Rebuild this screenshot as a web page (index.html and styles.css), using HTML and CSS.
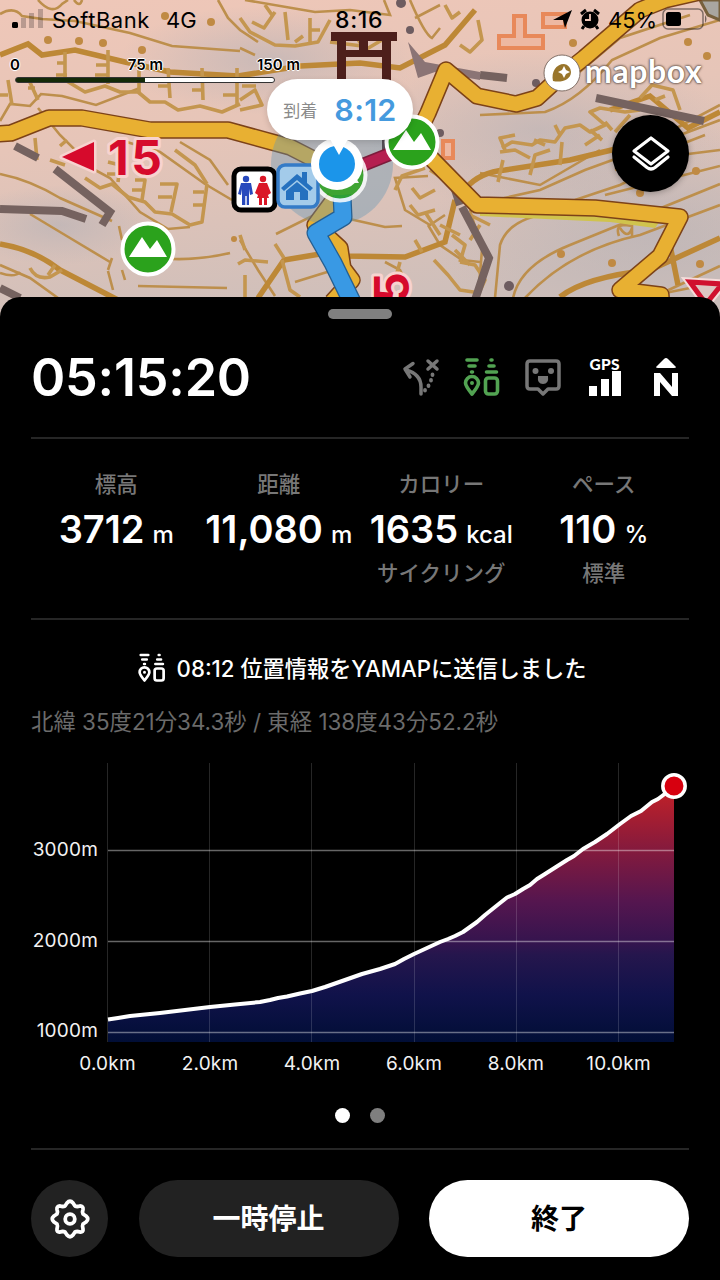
FILE: index.html
```
<!DOCTYPE html>
<html lang="ja">
<head>
    <meta charset="UTF-8">
    <title>YAMAP</title>
    <link rel="stylesheet" href="styles.css">
</head>
<body>
    <!-- 地図 -->
    <div class="map">
        <svg class="map-canvas" width="720" height="320" viewBox="0 0 720 320">
            <defs>
                <linearGradient id="land" x1="0" y1="0" x2="0.25" y2="1">
                    <stop offset="0" stop-color="#efc7b8"/>
                    <stop offset="0.45" stop-color="#e6c5b8"/>
                    <stop offset="1" stop-color="#cfbfba"/>
                </linearGradient>
                <radialGradient id="shade">
                    <stop offset="0" stop-color="#b4b1b6" stop-opacity="0.6"/>
                    <stop offset="1" stop-color="#b4b1b6" stop-opacity="0"/>
                </radialGradient>
            </defs>
            <rect width="720" height="320" fill="url(#land)"/>
            <ellipse cx="270" cy="60" rx="150" ry="55" fill="url(#shade)"/>
            <ellipse cx="540" cy="130" rx="190" ry="80" fill="url(#shade)"/>
            <ellipse cx="650" cy="230" rx="220" ry="110" fill="url(#shade)"/>
            <ellipse cx="60" cy="225" rx="100" ry="40" fill="url(#shade)"/>

            <!-- 等高線 -->
            <g class="contour">
                <path d="M0 14Q14 6 22 16L42 19L75 21L130 33L172 46L240 51"/>
                <path d="M38 0Q52 16 62 4L68 0M74 0Q80 8 82 0M218 0L228 18L240 30L258 42"/>
                <path d="M0 174Q30 180 60 198L112 221M30 214L70 238L110 262M0 265L30 278L58 298"/>
                <path d="M38 108L60 135L95 170L110 178L140 212L168 229L190 227M120 140L160 152L205 184L232 200"/>
                <path d="M172 259Q200 260 230 253M138 286L227 288M119 226L122 240M112 258L108 270M108 271L113 290M122 270L125 280"/>
                <path d="M0 121L10 104L30 106L41 94L62 96L96 105L140 88"/>
                <path d="M276 234L320 212L345 218L385 227L402 226M295 282L340 268M385 262L400 270L410 290"/>
                <path d="M500 199L540 190L585 170L640 150L720 120M575 200L620 185L680 155L720 150"/>
                <path d="M495 298L500 245Q510 215 560 213M513 298Q520 265 570 245L720 184M525 298Q570 250 640 235L720 205M660 294L720 266"/>
                <path d="M480 115L545 112Q580 100 612 60L660 38L720 20M570 80L620 38L690 15"/>
                <path d="M480 173L540 185L600 150M650 142L720 105M470 210L482 250L478 298"/>
                <path d="M410 0Q425 35 432 38L440 28M440 5L415 18M384 0L390 15L350 10L315 12L245 0"/>
                <path d="M240 48L255 55M180 142L210 160L228 185M240 240L258 270L275 296M0 273Q15 278 20 272"/>
                <path d="M615 170L705 135M605 195L720 166M640 298L720 282"/>
                <path d="M428 176L395 178L405 210L430 225L445 215M428 225L440 245L462 260L480 262"/>
            </g>

            <!-- 太い等高線 -->
            <g class="contour-bold">
                <path d="M0 55L28 44L42 55L75 50L125 62L170 72L238 76L300 66L360 63L400 68L445 45L475 10"/>
                <path d="M0 244Q35 250 60 270L118 300"/>
                <path d="M258 298L284 260L320 254L345 256L405 257L445 242L455 200"/>
                <path d="M466 188Q480 172 505 170L570 160L620 148L650 140"/>
                <path d="M560 297Q585 277 650 270L720 238M668 235L678 285"/>
                <path d="M610 110L650 96L688 128L720 112"/>
            </g>

            <!-- 崖記号 -->
            <g class="cliff">
                <path d="M65 52V80L85 92L105 86L120 92L138 92L150 102L165 102L178 110L200 106L222 112L240 104"/>
                <path d="M8 80L12 105M0 95H8M28 78L38 100M28 88H35M57 63H66M67 75H56M108 50V84M96 65H108M95 75H108M139 70V92M168 68L170 98M158 86H169M202 68L203 100M192 90H202M237 68V105M223 95H237"/>
                <path d="M240 18L250 32L275 45L295 46L318 42L330 20M252 22L264 28L275 12M285 12L288 40M310 18V42M295 42L303 36M310 30H320M272 15L265 5M330 42L362 46"/>
                <path d="M240 100L255 90L262 105L240 110M242 86H256M355 35L365 50L382 40M460 45L470 52L482 40L478 20M445 5L452 18L460 12"/>
                <path d="M85 178L100 188L112 184L128 197L145 202L155 212L172 214L190 225L202 222L207 184"/>
                <path d="M108 162L120 165L118 182M107 174H118M135 180H145L142 200M132 190H143M160 184H177L171 212M158 197H172M193 192H204M193 205H203M175 150L195 165L207 184"/>
                <path d="M30 268Q36 280 50 277L62 270M55 265L48 275M35 138L37 160M60 146L67 140M50 160L65 165"/>
                <path d="M500 152L515 150L530 158M498 182L503 160M530 175L535 155L550 150M560 165L562 142M534 140L545 145M505 150L500 138L515 135"/>
                <path d="M502 148L512 142L532 145L540 140L555 142L565 128L580 125L590 132L605 125L590 112L600 108L625 112L640 110M560 135L555 125M585 145L600 135M612 130L605 122"/>
                <path d="M640 98L652 85L673 90L680 110M655 100L665 96M615 132L630 115M590 130L602 140"/>
                <path d="M395 190L402 176L425 168M412 188L420 198L435 190M410 205L418 215L435 210M425 212L440 235M415 240L422 252M452 235L465 245L460 262M470 215L490 225M480 225L470 240M434 260L448 275L460 290L480 293M400 262L395 280"/>
                <path d="M282 260L290 290L300 297M275 244L284 258M238 264L245 260L268 262M240 235L245 250M245 275V298"/>
                <path d="M460 262L475 265L485 280L478 295M455 250L470 265M430 170L445 180L455 175M440 225L460 235"/>
            </g>

            <!-- 点 -->
            <g class="dots">
                <circle cx="48" cy="40" r="4"/><circle cx="79" cy="41" r="4"/><circle cx="103" cy="43" r="4"/>
                <circle cx="142" cy="50" r="4"/><circle cx="165" cy="16" r="4"/><circle cx="211" cy="22" r="4"/>
                <circle cx="573" cy="43" r="4"/><circle cx="688" cy="42" r="4"/><circle cx="707" cy="56" r="4"/>
                <circle cx="561" cy="254" r="4"/><circle cx="612" cy="263" r="4"/><circle cx="700" cy="264" r="4"/>
                <circle cx="696" cy="171" r="4"/><circle cx="234" cy="239" r="3"/><circle cx="640" cy="193" r="4"/>
            </g>
            <path class="contour" d="M619 236Q615 225 625 225L632 226V238M620 228Q628 240 632 228"/>
            <g class="rock-dots">
                <circle cx="401" cy="3" r="5"/><circle cx="410" cy="30" r="4"/><circle cx="536" cy="83" r="4"/>
                <circle cx="509" cy="286" r="5"/><circle cx="440" cy="133" r="4"/>
            </g>

            <!-- 岩場 -->
            <g class="rock">
                <path d="M15 146L38 158M0 209L62 211L86 219M55 169L110 212L102 225M0 288L20 298"/>
                <path d="M480 75L507 78M596 98L704 121M462 207L489 258L475 300M448 168L460 205"/>
            </g>
            <path d="M408 42L425 62L480 72V80L435 72L418 78Z" fill="#8b7475"/>
            <path d="M700 0L708 15L720 20V0Z" fill="#a9a6a0" stroke="#77603c" stroke-width="3"/>

            <!-- 建物 -->
            <g class="building">
                <path d="M514 16H525V36H543V48H499V36H514ZM543 14H565V27H543ZM443 141H453V158H443Z"/>
            </g>

            <!-- 鳥居 -->
            <g fill="#4d1f1b">
                <rect x="331" y="32" width="66" height="9"/>
                <rect x="337" y="38" width="9" height="112"/>
                <rect x="382" y="38" width="9" height="112"/>
                <rect x="345" y="50" width="38" height="7"/>
                <rect x="359" y="38" width="9" height="17"/>
            </g>
            <path d="M480 209L560 211L640 218L660 221L655 228L610 222L480 216Z" fill="#d0c34d"/>

            <!-- 道 -->
            <g class="road-edge">
                <path d="M-5 134L11 133L49 118L82 118L150 130L228 130L290 147L335 170"/>
                <path d="M415 140L428 113L446 70L477 96L516 104L537 98L560 77L584 58L640 10L665 0L700 -8"/>
                <path d="M425 152L477 205L595 208L680 217L660 256L620 290L661 295L662 310"/>
                <path d="M335 198L315 225L340 248L343 268L352 280L332 302"/>
            </g>
            <g class="road">
                <path d="M-5 134L11 133L49 118L82 118L150 130L228 130L290 147L335 170"/>
                <path d="M415 140L428 113L446 70L477 96L516 104L537 98L560 77L584 58L640 10L665 0L700 -8"/>
                <path d="M425 152L477 205L595 208L680 217L660 256L620 290L661 295L662 310"/>
                <path d="M335 198L315 225L340 248L343 268L352 280L332 302"/>
            </g>

            <circle cx="332" cy="164" r="61" fill="#6096b6" fill-opacity="0.38"/>
            <path d="M350 170L400 150" stroke="#7c1c3b" stroke-width="14"/>
            <path d="M350 170L400 150" stroke="#b51f50" stroke-width="11"/>
            <path class="track-edge" d="M342 195L343 217L316 233L333 263L353 304"/>
            <path class="track" d="M342 195L343 217L316 233L333 263L353 304"/>

            <!-- コースタイム -->
            <path d="M62 157L94 142V171Z" fill="#d60a2c" stroke="#f7d3cf" stroke-width="5" paint-order="stroke" stroke-linejoin="round"/>
            <text class="course" x="108" y="175">15</text>
            <text class="course course-turned" transform="translate(409 303) rotate(-90)">5</text>
            <path d="M690 282L722 284L706 304Z" fill="#f4dcda" stroke="#f4dcda" stroke-width="9"/>
            <path d="M690 282L722 284L706 304Z" fill="#dcc6c3" stroke="#d0102f" stroke-width="5"/>

            <!-- 山頂マーカー -->
            <g id="peak1">
                <circle cx="148" cy="249" r="25.5" fill="#2ba21c" stroke="#fff" stroke-width="4"/>
                <path d="M129 257L142 237L150 249L157 240L167 257Z" fill="#fff"/>
            </g>
            <use href="#peak1" x="264" y="-107"/>
            <g opacity="0.85"><use href="#peak1" x="192" y="-74"/></g>

            <!-- トイレ -->
            <rect x="234" y="169" width="41" height="41" rx="7" fill="#fff" stroke="#000" stroke-width="5"/>
            <g fill="#2749bd">
                <circle cx="246" cy="179" r="3.2"/>
                <path d="M241 183H251L253 194L250 195L249 189V205H246.7V196H245.3V205H242V189L241 195L238 194Z"/>
            </g>
            <g fill="#da1728">
                <circle cx="263" cy="179" r="3.2"/>
                <path d="M259 183H267L271 193L268 195L266 189L269 198H267V205H264V198H262V205H259V198H257L260 189L258 195L255 193Z"/>
            </g>

            <!-- 山小屋 -->
            <rect x="278" y="165" width="40" height="42" rx="7" fill="#a3cbea" stroke="#347bc7" stroke-width="3.5"/>
            <path d="M281 188L297 174L302 178V172H307V183L313 188L310 191L297 180L284 191ZM286 191L297 182L308 191V200H300V192H294V200H286Z" fill="#2571bf"/>

            <!-- 現在地 -->
            <circle cx="337" cy="164" r="26" fill="#fff"/>
            <circle cx="337" cy="164" r="18" fill="#1b95ea"/>
        </svg>

        <div class="status">
            <svg class="signal" width="34" height="20" viewBox="0 0 34 20">
                <rect x="1" y="14" width="6" height="6" rx="1.5"/>
                <g opacity="0.22"><rect x="10" y="10" width="5" height="10"/><rect x="18" y="5" width="5" height="15"/><rect x="27" y="1" width="5" height="19"/></g>
            </svg>
            <span class="carrier">SoftBank</span>
            <span class="network">4G</span>
            <span class="clock">8:16</span>
            <svg class="status-icons" width="48" height="22" viewBox="0 0 48 22">
                <path d="M0 12L19 2L12 20L10 12Z"/>
                <circle cx="37" cy="12" r="8.5"/>
                <path d="M28 6L33 2M46 6L41 2M31 18L29 21M43 18L45 21" stroke="#000" stroke-width="3"/>
                <path d="M37 6V12H32" fill="none" stroke="#efc7b8" stroke-width="1.8"/>
            </svg>
            <span class="percent">45%</span>
            <svg class="battery" width="46" height="22" viewBox="0 0 46 22">
                <rect x="1" y="1" width="40" height="20" rx="5" fill="none" stroke="#000" stroke-opacity="0.45" stroke-width="1.5"/>
                <rect x="4" y="4" width="15" height="14" rx="2.5"/>
                <path d="M43 7Q46 11 43 15Z" opacity="0.5"/>
            </svg>
        </div>

        <!-- 縮尺 -->
        <div class="scale">
            <div class="scale-labels"><span>0</span><span>75 m</span><span>150 m</span></div>
            <div class="scale-bar"></div>
        </div>

        <div class="mapbox">
            <svg width="38" height="38" viewBox="0 0 38 38">
                <circle cx="19" cy="19" r="18" fill="#fff" stroke="#816e65" stroke-width="1"/>
                <path d="M10 27C8 18 13 10 21 10A8 8 0 0 1 28 18C28 26 18 29 10 27Z" fill="#99752b"/>
                <path d="M21 12L23 16L27 18L23 20L21 24L19 20L15 18L19 16Z" fill="#fff"/>
            </svg>
            <span>mapbox</span>
        </div>

        <div class="layers">
            <svg width="42" height="42" viewBox="0 0 42 42" fill="none" stroke="#fff" stroke-width="3.2" stroke-linejoin="round" stroke-linecap="round">
                <path d="M21 5L38 18L21 31L4 18ZM4 24L17 34.5Q21 37.5 25 34.5L38 24"/>
            </svg>
        </div>

        <div class="callout"><span class="callout-label">到着</span><span class="callout-time">8:12</span></div>
    </div>

    <!-- 活動パネル -->
    <div class="sheet">
        <div class="grabber"></div>

        <div class="summary">
            <div class="timer">05:15:20</div>
            <div class="indicators">
                <svg width="40" height="44" viewBox="0 0 40 44" fill="none" stroke="#777" stroke-width="3.5" stroke-linecap="round" stroke-linejoin="round">
                    <path d="M20 38V31Q20 18 5 14M12 7.5L4 13L9 21M27 5L36 13M36 5L27 13"/>
                    <path d="M31.5 18.5V19M30 24V24.5M27.5 29.5V30M24 34V34.5" stroke-width="3.8"/>
                </svg>
                <svg width="40" height="44" viewBox="0 0 40 44">
                    <g id="send" fill="none" stroke="currentColor" stroke-width="3.6" stroke-linecap="round">
                        <path d="M5 4H15M7 10H13M9.5 16H10.5M29 4H30M27 10H32M24.5 16H34.5"/>
                        <path d="M10 38Q3.5 30 3.5 27A6.5 6.5 0 0 1 16.5 27Q16.5 30 10 38Z" stroke-linejoin="round"/>
                        <circle cx="10" cy="27" r="1" stroke-width="2"/>
                        <rect x="23.5" y="22" width="12" height="16" rx="3"/>
                    </g>
                </svg>
                <svg width="40" height="44" viewBox="0 0 40 44">
                    <path d="M7 5H33Q36 5 36 8V30Q36 33 33 33H25L20 38L15 33H7Q4 33 4 30V8Q4 5 7 5Z" fill="none" stroke="#777" stroke-width="3.5" stroke-linejoin="round"/>
                    <circle cx="12.5" cy="15" r="3" fill="#777"/><circle cx="28" cy="15" r="3" fill="#777"/>
                    <path d="M15 20H25Q26 28 20 28Q14 28 15 20Z" fill="#777"/>
                </svg>
                <div class="gps">
                    <span>GPS</span>
                    <svg width="32" height="25" viewBox="0 0 32 25" fill="#fff">
                        <path d="M0 15H8V25H0ZM12 8H20V25H12ZM23 0H32V25H23Z"/>
                    </svg>
                </div>
                <svg width="40" height="44" viewBox="0 0 40 44" fill="#fff">
                    <path d="M10 11L18 3Q20 1 22 3L30 11Q30 12 28 12H12Q10 12 10 11Z"/>
                    <path d="M8 40V17H14L26 31V17H32V40H26L14 26V40Z"/>
                </svg>
            </div>
        </div>

        <div class="stats">
            <div class="stat"><div class="stat-label">標高</div><div class="stat-value"><span>3712</span><small>m</small></div></div>
            <div class="stat"><div class="stat-label">距離</div><div class="stat-value"><span>11,080</span><small>m</small></div></div>
            <div class="stat"><div class="stat-label">カロリー</div><div class="stat-value"><span>1635</span><small>kcal</small></div><div class="stat-label">サイクリング</div></div>
            <div class="stat"><div class="stat-label">ペース</div><div class="stat-value"><span>110</span><small>%</small></div><div class="stat-label">標準</div></div>
        </div>

        <div class="notice">
            <svg width="30" height="33" viewBox="0 0 40 44"><use href="#send"/></svg>
            <span>08:12 位置情報をYAMAPに送信しました</span>
        </div>
        <div class="coords">北緯 35度21分34.3秒 / 東経 138度43分52.2秒</div>

        <!-- 標高グラフ -->
        <svg class="chart" width="658" height="330" viewBox="31 750 658 330">
            <defs>
                <linearGradient id="elevation" gradientUnits="userSpaceOnUse" x1="0" y1="786" x2="0" y2="1042">
                    <stop offset="0" stop-color="#c52127"/>
                    <stop offset="0.25" stop-color="#841a3d"/>
                    <stop offset="0.45" stop-color="#55164f"/>
                    <stop offset="0.61" stop-color="#35144e"/>
                    <stop offset="0.66" stop-color="#25164d"/>
                    <stop offset="0.82" stop-color="#10124a"/>
                    <stop offset="1" stop-color="#010e36"/>
                </linearGradient>
            </defs>
            <path fill="url(#elevation)" d="M108 1019L130 1016L160 1013L210 1007L260 1002L312 991L362 974L395 964L414 954L440 942L455 936L470 927L485 915L505 898L516 893L530 884L545 874L570 858L595 844L620 824L640 812L655 800L674 788V1042H108Z"/>
            <path class="grid-v" d="M107.5 763V1042M209.5 763V1042M311.5 763V1042M414.5 763V1042M516.5 763V1042M618.5 763V1042"/>
            <path class="grid-h" d="M108 850.5H674M108 941.5H674M108 1032.5H674"/>
            <path class="line" d="M108 1019.5L118 1018L130 1016L145 1014.5L160 1013L185 1010L210 1007L235 1004.5L260 1002L270 1000L278 998L287 996.5L300 993.5L312 991L325 987L345 980L362 974L380 969L395 964L404 959L414 954L427 948L440 942L448 939L455 936L463 932L470 927L477 922L485 915L495 907L500 903L507 897.5L515 894L523 889L530 885L537 879L545 874L556 867L567 860L574 856L583 849L595 842L607 834L620 824L631 816L641 811L652 802L658 799L674 787"/>
            <circle cx="674" cy="786" r="11.2" fill="#d7000f" stroke="#fff" stroke-width="3.5"/>
            <g class="axis axis-y">
                <text x="98" y="856">3000m</text>
                <text x="98" y="947">2000m</text>
                <text x="98" y="1037">1000m</text>
            </g>
            <g class="axis axis-x">
                <text x="107.5" y="1070">0.0km</text>
                <text x="210" y="1070">2.0km</text>
                <text x="312" y="1070">4.0km</text>
                <text x="414" y="1070">6.0km</text>
                <text x="516" y="1070">8.0km</text>
                <text x="618.5" y="1070">10.0km</text>
            </g>
        </svg>

        <div class="pager"><i class="page active"></i><i class="page"></i></div>

        <div class="actions">
            <div class="settings">
                <svg width="42" height="42" viewBox="0 0 42 42" fill="none" stroke="#fff" stroke-width="3.8" stroke-linejoin="round">
                    <path d="M18 5Q21 1.5 24 5L26 8Q28 9 31 8Q34.5 8 34 11.5Q33 14 34 16L37 18Q40.5 21 37 24L34 26Q33 28 34 31Q34.5 34.5 31 34Q28 33 26 34L24 37Q21 40.5 18 37L16 34Q14 33 11 34Q7.5 34.5 8 31Q9 28 8 26L5 24Q1.5 21 5 18L8 16Q9 14 8 11.5Q7.5 8 11 8Q14 9 16 8Z"/>
                    <circle cx="21" cy="21" r="4.8"/>
                </svg>
            </div>
            <div class="button pause">一時停止</div>
            <div class="button finish">終了</div>
        </div>
    </div>
</body>
</html>
```
FILE: styles.css
```
body {
    margin: 0;
    width: 720px;
    height: 1280px;
    background: #000;
    color: #fff;
    font-family: Inter, "Noto Sans CJK JP", sans-serif;
    overflow: hidden;
}

svg {
    display: block;
    flex: none;
}

.map {
    position: relative;
    height: 320px;
    color: #000;
}

.map-canvas {
    position: absolute;
    top: 0;
    left: 0;
}

.contour {
    fill: none;
    stroke: #bd8f4c;
    stroke-width: 2.6;
}

.contour-bold {
    fill: none;
    stroke: #bd8836;
    stroke-width: 5.5;
}

.cliff {
    fill: none;
    stroke: #c4964f;
    stroke-width: 3.6;
    stroke-linejoin: round;
}

.dots {
    fill: #c08a43;
}

.rock-dots {
    fill: #6d5c60;
}

.rock {
    fill: none;
    stroke: #75625f;
    stroke-width: 8;
}

.building {
    fill: #edb8a2;
    stroke: #e8895a;
    stroke-width: 4;
}

.road-edge,
.road,
.track-edge,
.track {
    fill: none;
    stroke: #7c4218;
    stroke-width: 17.5;
    stroke-linejoin: round;
}

.road {
    stroke: #e8b032;
    stroke-width: 14.5;
}

.track-edge {
    stroke: #255f91;
    stroke-width: 19;
}

.track {
    stroke: #3999e4;
    stroke-width: 16.5;
}

.course {
    font: 700 48px Inter, sans-serif;
    letter-spacing: 2.5px;
    fill: #d60a2c;
    stroke: #f7d3cf;
    stroke-width: 6px;
    paint-order: stroke;
    stroke-linejoin: round;
}

.status {
    position: absolute;
    top: 0;
    left: 11px;
    width: 699px;
    height: 40px;
    display: flex;
    align-items: center;
    font-size: 22px;
}

.signal {
    margin-right: 7px;
    margin-bottom: 4px;
}

.carrier {
    width: 98px;
    margin-right: 16px;
    letter-spacing: 0.5px;
}

.network {
    width: 169px;
}

.clock {
    width: 50px;
    font-size: 23px;
    font-weight: 500;
    letter-spacing: 0.7px;
}

.status-icons {
    margin-left: 168px;
    margin-bottom: 2px;
}

.percent {
    width: 50px;
    margin-left: 7px;
}

.battery {
    margin-left: 4px;
    margin-bottom: 2px;
}

.scale {
    position: absolute;
    top: 55px;
    left: 10px;
    width: 290px;
    font-size: 15px;
    font-weight: 600;
    line-height: 20px;
    text-shadow: 1px 0 #fff, -1px 0 #fff, 0 1px #fff, 0 -1px #fff, 0 0 2px #fff;
}

.scale-labels {
    display: flex;
    justify-content: space-between;
}

.scale-labels span:nth-child(2) {
    margin-left: 14px;
}

.scale-bar {
    width: 258px;
    height: 4px;
    margin: 2px 0 0 5px;
    border: 1.5px solid #333;
    border-radius: 4px;
    background: linear-gradient(90deg, #142a08 50%, #fff 50%);
}

.mapbox {
    position: absolute;
    top: 54px;
    left: 543px;
    display: flex;
    align-items: center;
    gap: 4px;
    color: #fff;
    font: 700 32px/38px Lato, sans-serif;
    letter-spacing: 0.6px;
    text-shadow: 0 0 2px #6c5a50, 0 0 2px #6c5a50, 0 0 3px #6c5a50;
}

.mapbox span {
    margin-top: -4px;
}

.layers {
    position: absolute;
    top: 115px;
    left: 612px;
    width: 77px;
    height: 77px;
    display: flex;
    align-items: center;
    justify-content: center;
    border-radius: 50%;
    background: #000;
    box-shadow: 0 1px 6px rgba(0, 0, 0, 0.3);
}

.callout {
    position: absolute;
    top: 79px;
    left: 267px;
    width: 146px;
    height: 61px;
    display: flex;
    align-items: center;
    justify-content: center;
    gap: 17px;
    border-radius: 31px;
    background: #fff;
    box-shadow: 0 2px 6px rgba(0, 0, 0, 0.15);
}

.callout::after {
    content: "";
    position: absolute;
    top: 60px;
    left: 63px;
    border: 9px solid transparent;
    border-top: 16px solid #fff;
    border-bottom: 0;
}

.callout-label {
    color: #8a8a8a;
    font-size: 17px;
}

.callout-time {
    color: #459ade;
    font-size: 30.5px;
    font-weight: 600;
    letter-spacing: 0.3px;
}

.sheet {
    position: relative;
    box-sizing: border-box;
    height: 983px;
    margin-top: -23px;
    padding: 12px 31px 0;
    border-radius: 20px 20px 0 0;
    background: #000;
}

.grabber {
    width: 64px;
    height: 10px;
    margin: 0 auto;
    border-radius: 5px;
    background: #808080;
}

.summary {
    display: flex;
    align-items: center;
    justify-content: space-between;
    height: 118px;
    padding-right: 3px;
    border-bottom: 2px solid #262626;
}

.timer {
    margin-top: -2px;
    font-size: 52px;
    font-weight: 600;
    letter-spacing: -0.2px;
}

.indicators {
    display: flex;
    gap: 21.3px;
    margin-top: -1px;
    color: #52a352;
}

.gps {
    display: flex;
    flex-direction: column;
    align-items: center;
    width: 40px;
    color: #fff;
    font: 900 15.5px/16px Lato, sans-serif;
    letter-spacing: 0.3px;
}

.gps svg {
    margin-top: -1px;
}

.stats {
    display: grid;
    grid-template-columns: repeat(4, 1fr);
    box-sizing: border-box;
    height: 181px;
    padding: 30px 4px 0;
    border-bottom: 2px solid #262626;
    text-align: center;
}

.stat {
    white-space: nowrap;
}

.stat-label {
    color: #777;
    font-size: 21.5px;
    font-weight: 500;
    line-height: 30px;
}

.stat-value {
    display: flex;
    align-items: baseline;
    justify-content: center;
    gap: 8px;
    height: 59px;
    font-size: 38px;
    font-weight: 600;
    line-height: 60px;
}

.stat-value small {
    font-size: 24px;
    font-weight: 500;
}

.notice {
    display: flex;
    align-items: center;
    justify-content: center;
    gap: 10px;
    height: 30px;
    padding: 33px 0 24px 3px;
    font-size: 22.2px;
    font-weight: 500;
    white-space: nowrap;
}

.notice span {
    margin-top: -2px;
}

.coords {
    height: 30px;
    color: #6b6b6b;
    font-size: 22.4px;
    line-height: 30px;
}

.chart {
    margin-top: 13px;
}

.grid-v {
    stroke: #fff;
    stroke-opacity: 0.15;
}

.grid-h {
    stroke: #fff;
    stroke-opacity: 0.4;
    stroke-width: 1.5;
}

.line {
    fill: none;
    stroke: #fff;
    stroke-width: 4;
    stroke-linejoin: round;
}

.axis {
    fill: #f2f2f2;
    font-size: 19px;
    letter-spacing: 0.2px;
}

.axis-y {
    text-anchor: end;
}

.axis-x {
    text-anchor: middle;
}

.pager {
    display: flex;
    justify-content: center;
    gap: 20px;
    padding: 28px 0 25px;
    border-bottom: 2px solid #262626;
}

.page {
    width: 15px;
    height: 15px;
    border-radius: 50%;
    background: #7f7f7f;
}

.page.active {
    background: #fff;
}

.actions {
    display: flex;
    gap: 30.5px;
    padding-top: 30px;
}

.settings,
.button {
    display: flex;
    align-items: center;
    justify-content: center;
    height: 77px;
    border-radius: 39px;
    background: #222;
}

.settings {
    width: 77px;
}

.button {
    flex: 1;
    padding-bottom: 3px;
    box-sizing: border-box;
    font-size: 28px;
    font-weight: 700;
}

.finish {
    background: #fff;
    color: #000;
}
```
